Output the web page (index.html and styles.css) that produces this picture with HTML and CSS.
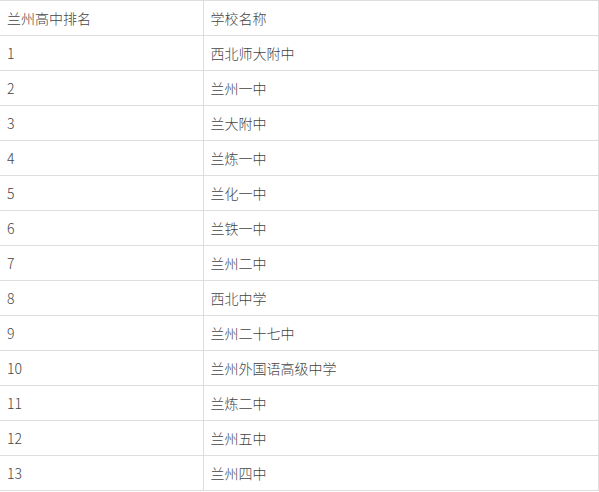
FILE: index.html
```html
<!DOCTYPE html>
<html lang="zh">
<head>
<meta charset="utf-8">
<title>兰州高中排名</title>
<link rel="stylesheet" href="styles.css">
</head>
<body>
<table class="rank-table">
  <tbody>
    <tr><td class="col-rank">兰州高中排名</td><td class="col-name">学校名称</td></tr>
    <tr><td class="col-rank">1</td><td class="col-name">西北师大附中</td></tr>
    <tr><td class="col-rank">2</td><td class="col-name">兰州一中</td></tr>
    <tr><td class="col-rank">3</td><td class="col-name">兰大附中</td></tr>
    <tr><td class="col-rank">4</td><td class="col-name">兰炼一中</td></tr>
    <tr><td class="col-rank">5</td><td class="col-name">兰化一中</td></tr>
    <tr><td class="col-rank">6</td><td class="col-name">兰铁一中</td></tr>
    <tr><td class="col-rank">7</td><td class="col-name">兰州二中</td></tr>
    <tr><td class="col-rank">8</td><td class="col-name">西北中学</td></tr>
    <tr><td class="col-rank">9</td><td class="col-name">兰州二十七中</td></tr>
    <tr><td class="col-rank">10</td><td class="col-name">兰州外国语高级中学</td></tr>
    <tr><td class="col-rank">11</td><td class="col-name">兰炼二中</td></tr>
    <tr><td class="col-rank">12</td><td class="col-name">兰州五中</td></tr>
    <tr><td class="col-rank">13</td><td class="col-name">兰州四中</td></tr>
  </tbody>
</table>
</body>
</html>
```
FILE: styles.css
```css
html, body {
  margin: 0;
  padding: 0;
  background: #fff;
}
body {
  font-family: "Noto Sans CJK SC", "Noto Sans", sans-serif;
  font-size: 14px;
  font-weight: 300;
  color: #444;
}
.rank-table {
  border-collapse: collapse;
  width: 599px;
  table-layout: fixed;
}
.rank-table td {
  height: 35px;
  padding: 0 7px;
  box-sizing: border-box;
  border-top: 1px solid #ddd;
  border-bottom: 1px solid #ddd;
  vertical-align: middle;
  line-height: 20px;
  white-space: nowrap;
}
.col-rank {
  width: 203px;
  border-right: 1px solid #ddd;
}
.col-name {
  border-right: 1px solid #ddd;
}
```
